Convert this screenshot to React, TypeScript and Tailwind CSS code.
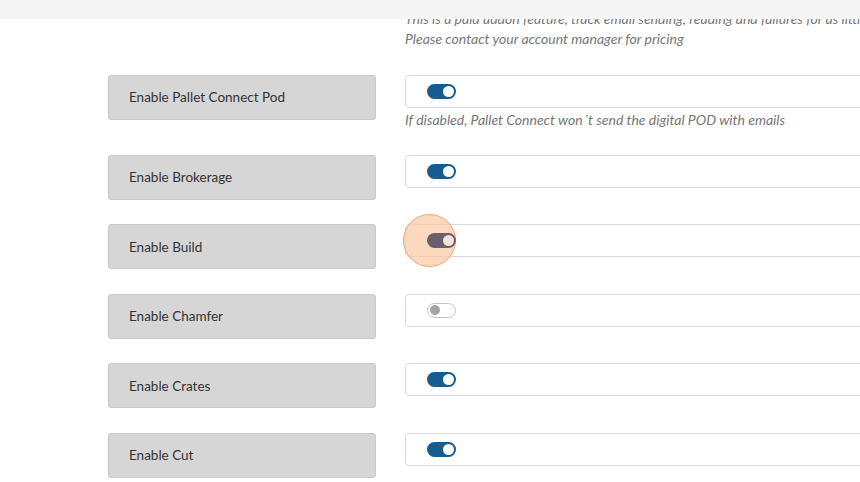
import React from 'react';

type Row = {
  label: string;
  state: 'on' | 'off' | 'pressed';
  help?: string;
};

const rows: Row[] = [
  { label: 'Enable Pallet Connect Pod', state: 'on', help: 'If disabled, Pallet Connect won´t send the digital POD with emails' },
  { label: 'Enable Brokerage', state: 'on' },
  { label: 'Enable Build', state: 'pressed' },
  { label: 'Enable Chamfer', state: 'off' },
  { label: 'Enable Crates', state: 'on' },
  { label: 'Enable Cut', state: 'on' },
];

function Toggle({ state }: { state: Row['state'] }) {
  if (state === 'off') {
    return (
      <span className="relative z-10 flex h-[15px] w-[29px] items-center rounded-full border border-[#c4c4c4] bg-white pl-[2px]">
        <span className="h-[10px] w-[10px] rounded-full bg-[#a3a3a3]" />
      </span>
    );
  }
  const bg = state === 'pressed' ? 'bg-[#6a5e6c]' : 'bg-[#175b8f]';
  const knob = state === 'pressed' ? 'bg-[#f7e2d3]' : 'bg-white';
  return (
    <span className={`relative z-10 flex h-[15px] w-[29px] items-center justify-end rounded-full pr-[2px] ${bg}`}>
      <span className={`h-[11px] w-[11px] rounded-full ${knob}`} />
    </span>
  );
}

export default function App() {
  return (
    <div
      className="relative h-[482px] w-[860px] overflow-hidden bg-white"
      style={{ fontFamily: 'Lato, "Open Sans", sans-serif' }}
    >
      <div className="pl-[108px] pt-[9px]">
        <div className="ml-[297px] whitespace-nowrap text-[14px] italic leading-[20px] text-[#777]">
          <div>This is a paid addon feature, track email sending, reading and failures for as little as</div>
          <div>Please contact your account manager for pricing</div>
        </div>

        <div className="mt-[26px] flex flex-col gap-[24.6px]">
          {rows.map((r) => (
            <div key={r.label} className="flex">
              <div className="flex h-[45px] w-[268px] shrink-0 items-center rounded-[3px] border border-[#c9c9c9] bg-[#d6d6d6] pl-[20px] text-[13.5px] text-[#333]">
                {r.label}
              </div>
              <div className="ml-[29px] w-[520px] shrink-0">
                <div className="relative flex h-[33px] items-center rounded-[4px] border border-[#dadada] bg-white pl-[21px]">
                  {r.state === 'pressed' && (
                    <span className="pointer-events-none absolute left-[-3px] top-[-11px] h-[53px] w-[53px] rounded-full border-[1.5px] border-[#f5a46c] bg-[#fbc9a3]/70" />
                  )}
                  <Toggle state={r.state} />
                </div>
                {r.help && (
                  <div className="mt-[2px] whitespace-nowrap text-[14px] italic leading-[20px] text-[#777]">{r.help}</div>
                )}
              </div>
            </div>
          ))}
        </div>
      </div>

      <div className="absolute left-0 right-0 top-0 h-[19px] bg-[#f5f5f5]" />
    </div>
  );
}
